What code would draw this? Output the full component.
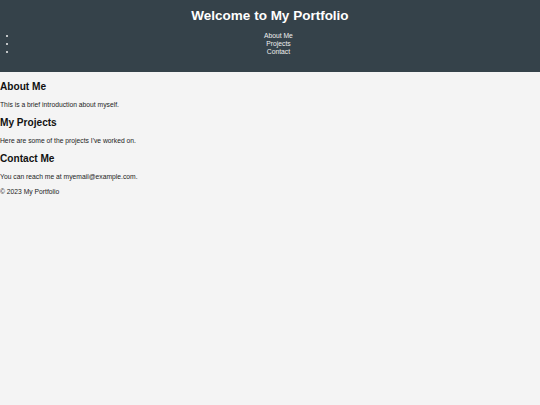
const links = ["About Me", "Projects", "Contact"];

const sections = [
  { title: "About Me", text: "This is a brief introduction about myself." },
  { title: "My Projects", text: "Here are some of the projects I've worked on." },
  { title: "Contact Me", text: "You can reach me at myemail@example.com." },
];

export default function App() {
  return (
    <div className="min-h-[405px] bg-[#f4f4f4] font-['Liberation_Sans',Arial,sans-serif] text-[#1c1c1c]">
      <header className="bg-[#35424a] text-white text-center pt-[8.4px] pb-[15.6px]">
        <h1 className="text-[13.5px] font-bold leading-[15.5px]">Welcome to My Portfolio</h1>
        <nav>
          <ul className="list-disc pl-[16.9px] mt-[8.5px] text-[6.75px] leading-[8px] text-[#f0f0f0]">
            {links.map((link) => (
              <li key={link}>
                <a href="#">{link}</a>
              </li>
            ))}
          </ul>
        </nav>
      </header>

      <main className="block pt-[0.5px]">
        {sections.map((s) => (
          <section key={s.title} className="block">
            <h2 className="text-[10.125px] font-bold leading-[11.6px] my-[8.4px] text-[#111]">{s.title}</h2>
            <p className="text-[6.75px] leading-[7.76px] my-[6.75px]">{s.text}</p>
          </section>
        ))}
      </main>

      <footer>
        <p className="text-[6.75px] leading-[7.76px] my-[6.75px]">© 2023 My Portfolio</p>
      </footer>
    </div>
  );
}
